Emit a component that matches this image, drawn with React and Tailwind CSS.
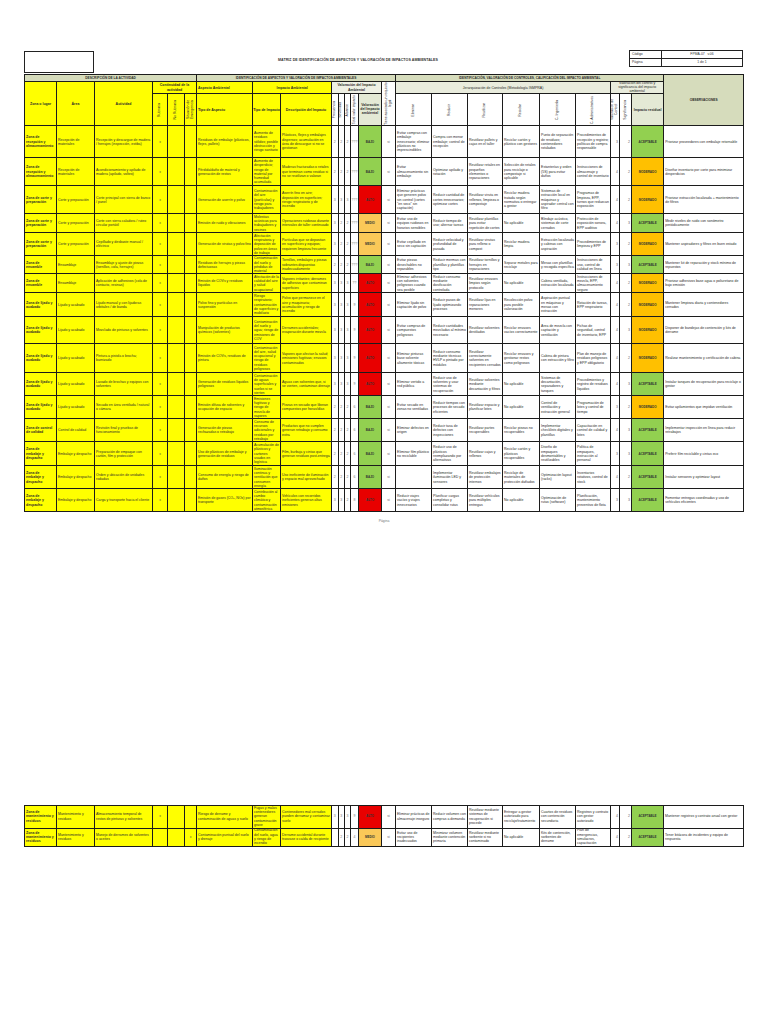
import React from 'react';

const rows = [
  {
    h: 'h-[31px]', zona: 'Zona de recepción y almacenamiento', area: 'Recepción de materiales',
    act: 'Recepción y descargue de madera / herrajes (inspección, estiba)', cont: ['x', '', ''],
    asp: 'Residuos de embalaje (plásticos, flejes, pallets)',
    imp: 'Aumento de residuos sólidos; posible obstrucción y riesgo sanitario',
    desc: 'Plásticos, flejes y embalajes dispersos; acumulación en área de descargue si no se gestionan',
    v: ['2', '2', '2', '???'], val: 'BAJO',
    ctrl: ['Evitar compras con embalaje innecesario; eliminar plásticos no imprescindibles', 'Compra con menor embalaje; control de recepción', 'Reutilizar pallets y cajas en el taller', 'Reciclar cartón y plástico con gestores', 'Punto de separación de residuos; contenedores rotulados', 'Procedimientos de recepción y registro; políticas de compra responsable'],
    vc: ['3', '2'], res: 'ACEPTABLE', obs: 'Priorizar proveedores con embalaje retornable',
  },
  {
    h: 'h-[27px]', zona: 'Zona de recepción y almacenamiento', area: 'Recepción de materiales',
    act: 'Acondicionamiento y apilado de madera (apilado, volteo)', cont: ['x', '', ''],
    asp: 'Pérdida/daño de material y generación de restos',
    imp: 'Aumento de desperdicio; riesgo de material por humedad acumulada',
    desc: 'Maderas fracturadas o retales que terminan como residuo si no se reutilizan o valoran',
    v: ['2', '2', '2', '???'], val: 'BAJO',
    ctrl: ['Evitar almacenamiento sin embalaje', 'Optimizar apilado y rotación', 'Reutilizar retales en pequeños elementos o reparaciones', 'Selección de retales para reciclaje o compostaje si aplicable', 'Estanterías y orden (5S) para evitar daños', 'Instrucciones de almacenaje y control de inventario'],
    vc: ['4', '2'], res: 'MODERADO', obs: 'Diseñar inventario por corte para minimizar desperdicios',
  },
  {
    h: 'h-[27px]', zona: 'Zona de corte y preparación', area: 'Corte y preparación',
    act: 'Corte principal con sierra de banco / panel', cont: ['x', '', ''],
    asp: 'Generación de aserrín y polvo',
    imp: 'Contaminación del aire (partículas) y riesgo para trabajadores',
    desc: 'Aserrín fino en aire; deposición en superficies; riesgo respiratorio y de incendio',
    v: ['3', '3', '3', '???'], val: 'ALTO',
    ctrl: ['Eliminar prácticas que generen polvo sin control (cortes "en seco" sin captación)', 'Reducir cantidad de cortes innecesarios; optimizar cortes', 'Reutilizar viruta en rellenos, limpieza o compostaje', 'Reciclar madera tratada según normativa o entregar a gestor', 'Sistemas de extracción local en máquinas y aspirador central con filtro', 'Programas de limpieza, EPP, turnos que reduzcan exposición'],
    vc: ['4', '2'], res: 'MODERADO', obs: 'Priorizar extracción localizada + mantenimiento de filtros',
  },
  {
    h: 'h-[18px]', zona: 'Zona de corte y preparación', area: 'Corte y preparación',
    act: 'Corte con sierra caladora / ruteo circular portátil', cont: ['x', '', ''],
    asp: 'Emisión de ruido y vibraciones',
    imp: 'Molestias acústicas para trabajadores y vecinos',
    desc: 'Operaciones ruidosas durante intervalos de taller continuado',
    v: ['3', '2', '2', '???'], val: 'MEDIO',
    ctrl: ['Evitar uso de equipos ruidosos en horarios sensibles', 'Reducir tiempo de uso; alternar tareas', 'Reutilizar plantillas para evitar repetición de cortes', 'No aplicable', 'Blindaje acústico, sistemas de corte cerrados', 'Protección de exposición sonora, EPP auditivo'],
    vc: ['4', '3'], res: 'ACEPTABLE', obs: 'Medir niveles de ruido con sonómetro periódicamente',
  },
  {
    h: 'h-[22px]', zona: 'Zona de corte y preparación', area: 'Corte y preparación',
    act: 'Cepillado y desbaste manual / eléctrico', cont: ['x', '', ''],
    asp: 'Generación de virutas y polvo fino',
    imp: 'Afectación respiratoria y deposición de polvo en áreas de trabajo',
    desc: 'Partículas que se depositan en superficies y equipos; requieren limpieza frecuente',
    v: ['3', '2', '2', '???'], val: 'MEDIO',
    ctrl: ['Evitar cepillado en seco sin captación', 'Reducir velocidad y profundidad de pasada', 'Reutilizar virutas para relleno o compost', 'Reciclar madera limpia', 'Extracción localizada y cabinas con aspiración', 'Procedimientos de limpieza y EPP'],
    vc: ['3', '2'], res: 'MODERADO', obs: 'Mantener aspiradores y filtros en buen estado',
  },
  {
    h: 'h-[17px]', zona: 'Zona de ensamble', area: 'Ensamblaje',
    act: 'Ensamblaje y ajuste de piezas (tornillos, cola, herrajes)', cont: ['x', '', ''],
    asp: 'Residuos de herrajes y piezas defectuosas',
    imp: 'Contaminación del suelo y pérdidas de material',
    desc: 'Tornillos, embalajes y piezas sobrantes dispuestas inadecuadamente',
    v: ['2', '2', '2', '???'], val: 'BAJO',
    ctrl: ['Evitar piezas desechables no reparables', 'Reducir mermas con plantillas y plantillas tipo', 'Reutilizar tornillos y herrajes en reparaciones', 'Separar metales para reciclaje', 'Mesas con plantillas y recogida específica', 'Instrucciones de uso, control de calidad en línea'],
    vc: ['3', '3'], res: 'ACEPTABLE', obs: 'Mantener kit de reparación y stock mínimo de repuestos',
  },
  {
    h: 'h-[18px]', zona: 'Zona de ensamble', area: 'Ensamblaje',
    act: 'Aplicación de adhesivos (cola de contacto, resinas)', cont: ['x', '', ''],
    asp: 'Emisión de COVs y residuos líquidos',
    imp: 'Afectación de la calidad del aire y salud ocupacional',
    desc: 'Vapores irritantes; derrames de adhesivo que contaminan superficies',
    v: ['3', '3', '3', '??'], val: 'ALTO',
    ctrl: ['Eliminar adhesivos con solventes peligrosos cuando sea posible', 'Reducir consumo mediante dosificación controlada', 'Reutilizar envases limpios según protocolo', 'No aplicable', 'Cabina ventilada, extracción localizada', 'Instrucciones de mezcla, EPP, almacenamiento seguro'],
    vc: ['4', '2'], res: 'MODERADO', obs: 'Priorizar adhesivos base agua o poliuretano de bajo emisión',
  },
  {
    h: 'h-[23px]', zona: 'Zona de lijado y acabado', area: 'Lijado y acabado',
    act: 'Lijado manual y con lijadoras orbitales / de banda', cont: ['x', '', ''],
    asp: 'Polvo fino y partículas en suspensión',
    imp: 'Riesgo respiratorio; contaminación de superficies y mobiliario',
    desc: 'Polvo que permanece en el aire y maquinaria; acumulación y riesgo de incendio',
    v: ['3', '3', '3', '9'], val: 'ALTO',
    ctrl: ['Eliminar lijado sin captación de polvo', 'Reducir pasos de lijado optimizando procesos', 'Reutilizar lijas en reparaciones menores', 'Recolección polvo para posible valorización', 'Aspiración puntual en máquinas y mesas con extracción', 'Rotación de tareas, EPP respiratorio'],
    vc: ['4', '2'], res: 'MODERADO', obs: 'Mantener limpieza diaria y contenedores cerrados',
  },
  {
    h: 'h-[26px]', zona: 'Zona de lijado y acabado', area: 'Lijado y acabado',
    act: 'Mezclado de pinturas y solventes', cont: ['x', '', ''],
    asp: 'Manipulación de productos químicos (solventes)',
    imp: 'Contaminación del suelo y agua; riesgo de emisiones de COV',
    desc: 'Derrames accidentales; evaporación durante mezcla',
    v: ['3', '3', '3', '9'], val: 'ALTO',
    ctrl: ['Evitar compras de compuestos peligrosos', 'Reducir cantidades mezcladas al mínimo necesario', 'Reutilizar solventes destilados', 'Reciclar envases vacíos correctamente', 'Área de mezcla con captación y ventilación', 'Fichas de seguridad, control de inventario, EPP'],
    vc: ['4', '3'], res: 'MODERADO', obs: 'Disponer de bandejas de contención y kits de derrame',
  },
  {
    h: 'h-[28px]', zona: 'Zona de lijado y acabado', area: 'Lijado y acabado',
    act: 'Pintura a pistola o brocha; barnizado', cont: ['x', '', ''],
    asp: 'Emisión de COVs, residuos de pintura',
    imp: 'Contaminación del aire, salud ocupacional y riesgo de residuos peligrosos',
    desc: 'Vapores que afectan la salud; emisiones fugitivas; envases contaminados',
    v: ['3', '3', '3', '9'], val: 'ALTO',
    ctrl: ['Eliminar pinturas base solvente altamente tóxicas', 'Reducir consumo mediante técnicas HVLP o pintado por módulos', 'Reutilizar correctamente solventes en recipientes cerrados', 'Reciclar envases y gestionar restos como peligrosos', 'Cabina de pintura con extracción y filtro', 'Plan de manejo de residuos peligrosos y EPP obligatorio'],
    vc: ['4', '2'], res: 'MODERADO', obs: 'Realizar mantenimiento y certificación de cabina',
  },
  {
    h: 'h-[22px]', zona: 'Zona de lijado y acabado', area: 'Lijado y acabado',
    act: 'Lavado de brochas y equipos con solventes', cont: ['x', '', ''],
    asp: 'Generación de residuos líquidos peligrosos',
    imp: 'Contaminación de aguas superficiales y suelos si se vierten',
    desc: 'Aguas con solventes que, si se vierten, contaminan drenaje',
    v: ['3', '3', '3', '9'], val: 'ALTO',
    ctrl: ['Eliminar vertido a red pública', 'Reducir uso de solventes y usar sistemas de recuperación', 'Reutilizar solventes mediante decantación y filtros', 'No aplicable', 'Sistemas de decantación, separadores y tanques', 'Procedimientos y registro de residuos líquidos'],
    vc: ['4', '3'], res: 'ACEPTABLE', obs: 'Instalar tanques de recuperación para reciclaje o gestor',
  },
  {
    h: 'h-[22px]', zona: 'Zona de lijado y acabado', area: 'Lijado y acabado',
    act: 'Secado en área ventilada / natural o cámara', cont: ['x', '', ''],
    asp: 'Emisión difusa de solventes y ocupación de espacio',
    imp: 'Emisiones fugitivas y riesgo de mezcla de vapores',
    desc: 'Piezas en secado que liberan compuestos por horas/días',
    v: ['2', '2', '2', '6'], val: 'BAJO',
    ctrl: ['Evitar secado en zonas no ventiladas', 'Reducir tiempos con procesos de secado eficientes', 'Reutilizar espacio y planificar lotes', 'No aplicable', 'Control de ventilación y extracción general', 'Programación de lotes y control de tiempo'],
    vc: ['3', '2'], res: 'MODERADO', obs: 'Evitar apilamientos que impidan ventilación',
  },
  {
    h: 'h-[22px]', zona: 'Zona de control de calidad', area: 'Control de calidad',
    act: 'Revisión final y pruebas de funcionamiento', cont: ['x', '', ''],
    asp: 'Generación de piezas rechazadas o retrabajo',
    imp: 'Consumo de recursos adicionales y residuos por retrabajo',
    desc: 'Productos que no cumplen generan retrabajo y consumo extra',
    v: ['2', '2', '2', '6'], val: 'BAJO',
    ctrl: ['Eliminar defectos en origen', 'Reducir tasa de defectos con inspecciones', 'Reutilizar partes recuperables', 'Reciclar piezas no recuperables', 'Implementar checklists digitales y plantillas', 'Capacitación en control de calidad y lotes'],
    vc: ['4', '3'], res: 'ACEPTABLE', obs: 'Implementar inspección en línea para reducir retrabajos',
  },
  {
    h: 'h-[23px]', zona: 'Zona de embalaje y despacho', area: 'Embalaje y despacho',
    act: 'Preparación de empaque con cartón, film y protección', cont: ['x', '', ''],
    asp: 'Uso de plásticos de embalaje y generación de residuos',
    imp: 'Acumulación de plásticos y cartones usados en logística',
    desc: 'Film, burbuja y cintas que generan residuos post-entrega',
    v: ['2', '2', '2', '6'], val: 'BAJO',
    ctrl: ['Eliminar film plástico no reciclable', 'Reducir uso de plásticos reemplazando por alternativas', 'Reutilizar cajas y rellenos', 'Reciclar cartón y plásticos recuperables', 'Diseño de empaques desmontables y reutilizables', 'Política de empaques, instrucción al personal'],
    vc: ['3', '3'], res: 'ACEPTABLE', obs: 'Preferir film reciclable y cintas eco',
  },
  {
    h: 'h-[22px]', zona: 'Zona de embalaje y despacho', area: 'Embalaje y despacho',
    act: 'Orden y ubicación de unidades rodadas', cont: ['x', '', ''],
    asp: 'Consumo de energía y riesgo de daños',
    imp: 'Iluminación continua y ventilación que consumen energía',
    desc: 'Uso ineficiente de iluminación y espacio mal aprovechado',
    v: ['2', '2', '2', '6'], val: 'BAJO',
    ctrl: ['', 'Implementar iluminación LED y sensores', 'Reutilizar embalajes de protección internos', 'Reciclaje de materiales de protección dañados', 'Optimización layout (racks)', 'Inventarios rotativos, control de stock'],
    vc: ['4', '2'], res: 'ACEPTABLE', obs: 'Instalar sensores y optimizar layout',
  },
  {
    h: 'h-[22px]', zona: 'Zona de embalaje y despacho', area: 'Embalaje y despacho',
    act: 'Carga y transporte hacia el cliente', cont: ['x', '', ''],
    asp: 'Emisión de gases (CO₂, NOx) por transporte',
    imp: 'Contribución al cambio climático y contaminación atmosférica',
    desc: 'Vehículos con recorridos ineficientes generan altas emisiones',
    v: ['3', '3', '2', '8'], val: 'ALTO',
    ctrl: ['Reducir viajes vacíos y viajes innecesarios', 'Planificar cargas completas y consolidar rutas', 'Reutilizar vehículos para múltiples entregas', 'No aplicable', 'Optimización de rutas (software)', 'Planificación, mantenimiento preventivo de flota'],
    vc: ['3', '3'], res: 'ACEPTABLE', obs: 'Fomentar entregas coordinadas y uso de vehículos eficientes',
  },
];

const bottomRows = [
  {
    h: 'h-[22px]', zona: 'Zona de mantenimiento y residuos', area: 'Mantenimiento y residuos',
    act: 'Almacenamiento temporal de restos de pinturas y solventes', cont: ['x', '', ''],
    asp: 'Riesgo de derrame y contaminación de aguas y suelo',
    imp: 'Fugas y malos contenedores generan contaminación grave',
    desc: 'Contenedores mal cerrados pueden derramar y contaminar suelo',
    v: ['3', '3', '3', '9'], val: 'ALTO',
    ctrl: ['Eliminar prácticas de almacenaje inseguro', 'Reducir volumen con compras a demanda', 'Reutilizar mediante sistemas de recuperación si procede', 'Entregar a gestor autorizado para reciclaje/tratamiento', 'Cuartos de residuos con contención secundaria', 'Registros y contrato con gestor autorizado'],
    vc: ['4', '2'], res: 'ACEPTABLE', obs: 'Mantener registros y contrato anual con gestor',
  },
  {
    h: 'h-[17px]', zona: 'Zona de mantenimiento y residuos', area: 'Mantenimiento y residuos',
    act: 'Manejo de derrames de solventes o aceites', cont: ['', '', 'x'],
    asp: 'Contaminación puntual del suelo y drenaje',
    imp: 'Contaminación del suelo, agua y riesgo de incendio',
    desc: 'Derrame accidental durante trasvase o caída de recipiente',
    v: ['', '2', '2', '4'], val: 'MEDIO',
    ctrl: ['Evitar uso de recipientes inadecuados', 'Minimizar volumen mediante contención primaria', 'Reutilizar mediante sorbente si no contaminado', 'No aplicable', 'Kits de contención, sorbentes de derrame', 'Plan de emergencias, simulacros, capacitación'],
    vc: ['4', '2'], res: 'ACEPTABLE', obs: 'Tener bitácora de incidentes y equipo de respuesta',
  },
];

const valColor = {
  BAJO: 'bg-[#92d050]',
  MEDIO: 'bg-[#fac858]',
  ALTO: 'bg-[#e80000]',
};

const resColor = {
  ACEPTABLE: 'bg-[#92d050]',
  MODERADO: 'bg-[#ffc000]',
};

const td = 'border border-[#1c1c1c] p-0 align-middle';

function Cols() {
  return (
    <colgroup>
      <col className="w-[32px]" />
      <col className="w-[38px]" />
      <col className="w-[58px]" />
      <col className="w-[15px]" />
      <col className="w-[17px]" />
      <col className="w-[12px]" />
      <col className="w-[56px]" />
      <col className="w-[28px]" />
      <col className="w-[51px]" />
      <col className="w-[6.5px]" />
      <col className="w-[6.5px]" />
      <col className="w-[6px]" />
      <col className="w-[8px]" />
      <col className="w-[23px]" />
      <col className="w-[14px]" />
      <col className="w-[36px]" />
      <col className="w-[36px]" />
      <col className="w-[35px]" />
      <col className="w-[37px]" />
      <col className="w-[36px]" />
      <col className="w-[35px]" />
      <col className="w-[9px]" />
      <col className="w-[12px]" />
      <col className="w-[32px]" />
      <col className="w-[80px]" />
    </colgroup>
  );
}

function Vert({ children }) {
  return (
    <div className="flex h-[31px] items-center justify-center overflow-hidden">
      <span className="[writing-mode:vertical-rl] rotate-180 text-center leading-[3.6px]">{children}</span>
    </div>
  );
}

function DataRow({ r }) {
  const box = `flex items-center overflow-hidden px-[1px] ${r.h}`;
  return (
    <tr>
      <td className={`${td} bg-[#ffff00]`}><div className={`${box} font-bold`}>{r.zona}</div></td>
      <td className={`${td} bg-[#ffff00]`}><div className={box}>{r.area}</div></td>
      <td className={`${td} bg-[#ffff00]`}><div className={box}>{r.act}</div></td>
      {r.cont.map((c, i) => (
        <td key={i} className={`${td} bg-[#ffff00]`}><div className={`${box} justify-center text-[#555]`}>{c}</div></td>
      ))}
      <td className={`${td} bg-[#ffff00]`}><div className={box}>{r.asp}</div></td>
      <td className={`${td} bg-[#ffff00]`}><div className={box}>{r.imp}</div></td>
      <td className={`${td} bg-[#ffff00]`}><div className={box}>{r.desc}</div></td>
      {r.v.map((c, i) => (
        <td key={i} className={`${td} bg-white`}><div className={`${box} justify-center text-[#777]`}>{c}</div></td>
      ))}
      <td className={`${td} ${valColor[r.val]}`}><div className={`${box} justify-center font-bold text-[3px] text-[#333]`}>{r.val}</div></td>
      <td className={`${td} bg-white`}><div className={`${box} justify-center text-[#666]`}>si</div></td>
      {r.ctrl.map((c, i) => (
        <td key={i} className={`${td} bg-white`}><div className={box}>{c}</div></td>
      ))}
      <td className={`${td} bg-white`}><div className={`${box} justify-end text-[#666]`}>{r.vc[0]}</div></td>
      <td className={`${td} bg-white`}><div className={`${box} justify-end text-[#666]`}>{r.vc[1]}</div></td>
      <td className={`${td} ${resColor[r.res]}`}><div className={`${box} justify-center font-bold text-[3px] text-[#333]`}>{r.res}</div></td>
      <td className={`${td} bg-white`}><div className={box}>{r.obs}</div></td>
    </tr>
  );
}

function MatrixHead() {
  const band = `${td} bg-[#d6dcbc] font-bold text-center text-[3.2px] h-[7px]`;
  return (
    <thead>
      <tr>
        <th colSpan={6} className={band}>DESCRIPCIÓN DE LA ACTIVIDAD</th>
        <th colSpan={9} className={band}>IDENTIFICACIÓN DE ASPECTOS Y VALORACIÓN DE IMPACTOS AMBIENTALES</th>
        <th colSpan={9} className={band}>IDENTIFICACIÓN, VALORACIÓN DE CONTROLES, CALIFICACIÓN DEL IMPACTO AMBIENTAL</th>
        <th rowSpan={3} className={`${td} bg-[#d6dcbc] font-bold text-[3.2px]`}>OBSERVACIONES</th>
      </tr>
      <tr className="h-[12px]">
        <th rowSpan={2} className={`${td} bg-[#ffff00] font-bold`}>Zona o lugar</th>
        <th rowSpan={2} className={`${td} bg-[#ffff00] font-bold`}>Área</th>
        <th rowSpan={2} className={`${td} bg-[#ffff00] font-bold`}>Actividad</th>
        <th colSpan={3} className={`${td} bg-[#ffff00] font-bold`}>Continuidad de la actividad</th>
        <th className={`${td} bg-[#ffff00] font-bold text-left px-[1px]`}>Aspecto Ambiental</th>
        <th colSpan={2} className={`${td} bg-[#ffff00] font-bold`}>Impacto Ambiental</th>
        <th colSpan={5} className={`${td} bg-[#eef0e4] font-bold`}>Valoración del Impacto Ambiental</th>
        <th rowSpan={2} className={`${td} bg-white font-normal`}>
          <div className="flex h-[43px] items-center justify-center">
            <span className="[writing-mode:vertical-rl] rotate-180 text-center leading-[3.6px]">Tiene asociado un requisito legal</span>
          </div>
        </th>
        <th colSpan={6} className={`${td} bg-[#e9ecdd] font-normal`}>Jerarquización de Controles (Metodología ISMPRA)</th>
        <th colSpan={3} className={`${td} bg-[#e9ecdd] font-normal leading-[3.8px]`}>Valoración del control y significancia del impacto ambiental</th>
      </tr>
      <tr>
        <th className={`${td} bg-[#ffff00] font-normal`}><Vert>Rutinaria</Vert></th>
        <th className={`${td} bg-[#ffff00] font-normal`}><Vert>No Rutinaria</Vert></th>
        <th className={`${td} bg-[#ffff00] font-normal`}><Vert>Situación de Emergencia</Vert></th>
        <th className={`${td} bg-[#ffff00] font-bold text-left px-[1px]`}>Tipo de Aspecto</th>
        <th className={`${td} bg-[#ffff00] font-bold`}>Tipo de Impacto</th>
        <th className={`${td} bg-[#ffff00] font-bold`}>Descripción del Impacto</th>
        <th className={`${td} bg-white font-normal`}><Vert>Frecuencia</Vert></th>
        <th className={`${td} bg-white font-normal`}><Vert>Severidad</Vert></th>
        <th className={`${td} bg-white font-normal`}><Vert>Alcance</Vert></th>
        <th className={`${td} bg-white font-normal`}><Vert>Total valor impacto</Vert></th>
        <th className={`${td} bg-[#e4e9d5] font-bold leading-[3.8px]`}>Valoración del Impacto ambiental</th>
        {['Eliminar', 'Reducir', 'Reutilizar', 'Reciclar', 'C. Ingeniería', 'C. Administrativos'].map((c) => (
          <th key={c} className={`${td} bg-white font-normal`}><Vert>{c}</Vert></th>
        ))}
        <th className={`${td} bg-white font-normal`}><Vert>Valoración de Control</Vert></th>
        <th className={`${td} bg-white font-normal`}><Vert>Significancia</Vert></th>
        <th className={`${td} bg-[#e4e9d5] font-bold`}>Impacto residual</th>
      </tr>
    </thead>
  );
}

function Matrix({ data, head }) {
  return (
    <table className="ml-[24px] w-[719px] table-fixed border-collapse border border-[#1c1c1c] text-[3.5px] leading-[4.3px] text-[#2a2a2a]">
      <Cols />
      {head && <MatrixHead />}
      <tbody>
        {data.map((r, i) => (
          <DataRow key={i} r={r} />
        ))}
      </tbody>
    </table>
  );
}

export default function App() {
  return (
    <div className="h-[1024px] w-[768px] overflow-hidden bg-white font-['Liberation_Sans',Arial,sans-serif] text-[#222]">
      <div className="flex h-[74px] items-start pl-[24px] pr-[25px] pt-[50px]">
        <div className="mt-[1px] h-[22px] w-[70px] border border-[#222]" />
        <div className="ml-[184px] mt-[8px] flex-1 text-[3.6px] font-bold tracking-[0.05px] text-[#333]">
          MATRIZ DE IDENTIFICACIÓN DE ASPECTOS Y VALORACIÓN DE IMPACTOS AMBIENTALES
        </div>
        <table className="w-[113px] table-fixed border-collapse text-[3.4px] text-[#333]">
          <colgroup>
            <col className="w-[32px]" />
            <col className="w-[81px]" />
          </colgroup>
          <tbody>
            <tr className="h-[8px]">
              <td className="border border-[#222] px-[2px]">Código</td>
              <td className="border border-[#222] text-center">FPMA-07&nbsp;&nbsp;&nbsp;v.06</td>
            </tr>
            <tr className="h-[8px]">
              <td className="border border-[#222] px-[2px]">Página</td>
              <td className="border border-[#222] text-center">1 de 1</td>
            </tr>
          </tbody>
        </table>
      </div>
      <Matrix data={rows} head />
      <div className="mt-[7px] text-center text-[3.4px] text-[#777]">Página</div>
      <div className="mt-[280px]">
        <Matrix data={bottomRows} />
      </div>
    </div>
  );
}
